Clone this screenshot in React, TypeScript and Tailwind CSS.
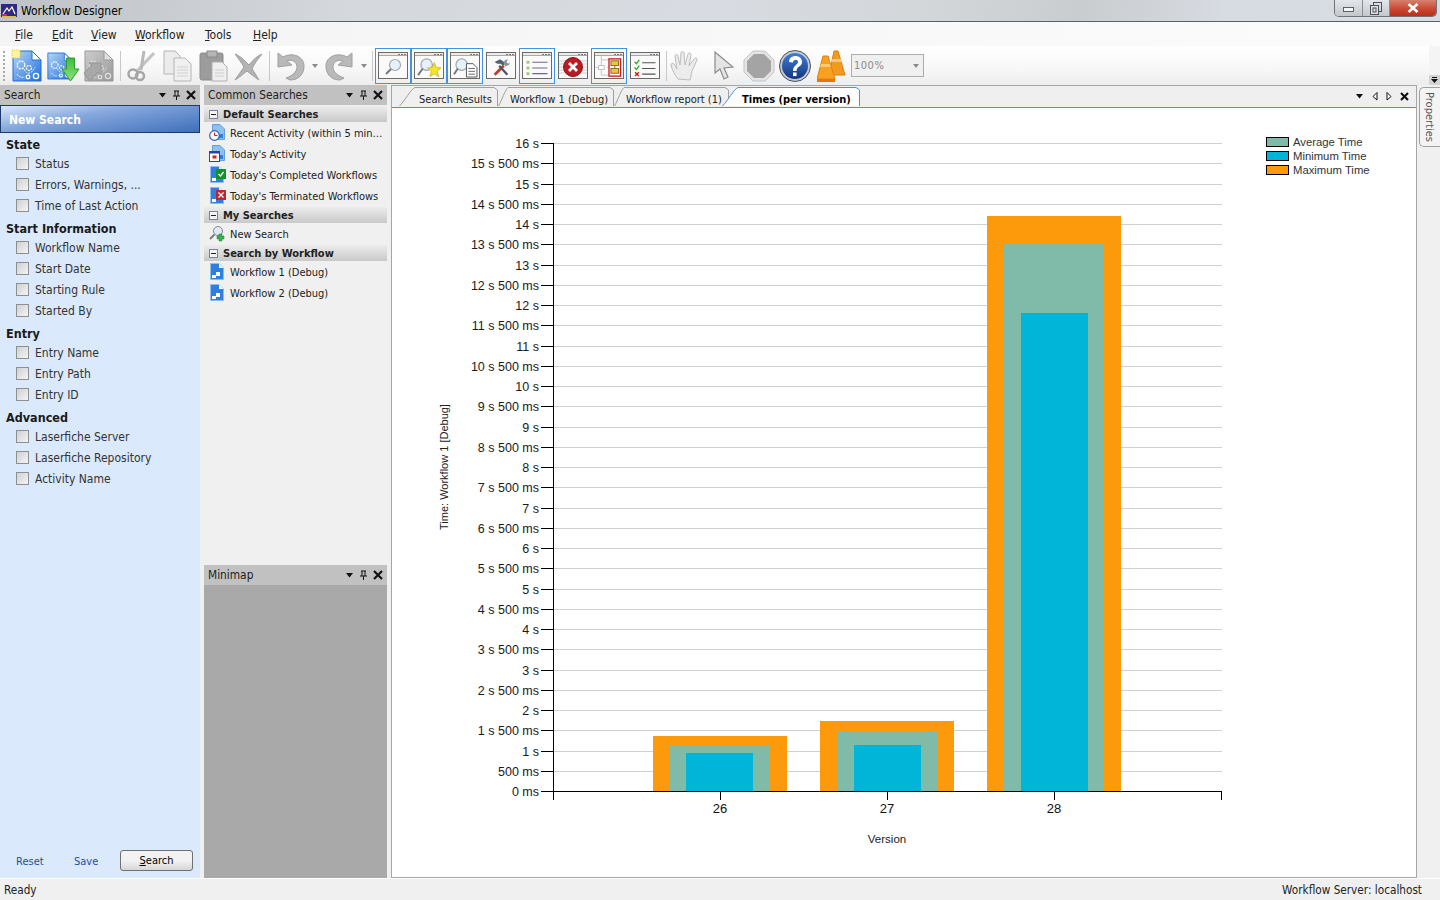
import React from "react";

const FONT = "font-['DejaVu_Sans_Condensed','DejaVu_Sans',sans-serif] [font-stretch:condensed]";

function Doc({ w = 30, h = 32, grey = false }: { w?: number; h?: number; grey?: boolean }) {
  const a = grey ? "#8f8f8f" : "#1f6fd6";
  const b = grey ? "#c8c8c8" : "#b6d6f8";
  const g = grey ? "#dddddd" : "#ffffff";
  return (
    <svg width={w} height={h} viewBox="0 0 30 32">
      <defs>
        <linearGradient id={grey ? "dg" : "db"} x1="0" y1="0" x2="1" y2="1">
          <stop offset="0" stopColor={b} />
          <stop offset="1" stopColor={a} />
        </linearGradient>
      </defs>
      <path d="M1 1H20L29 10V31H1Z" fill={`url(#${grey ? "dg" : "db"})`} stroke={a} />
      <path d="M20 1V10H29Z" fill={g} stroke={a} />
      <g fill="none" stroke={g} strokeWidth="1.300">
        <circle cx="9" cy="15" r="3.800" strokeDasharray="2 1" />
        <circle cx="17" cy="18" r="2.500" strokeDasharray="2 1" />
        <path d="M12 19C15 25 19 25 23 17M5 24C7 27 9 28 13 27" strokeWidth="0.900" strokeDasharray="2 1" />
        <circle cx="16" cy="27" r="1.800" />
        <circle cx="24" cy="26" r="2.600" />
      </g>
    </svg>
  );
}

function NewDoc() {
  return (
    <div className="relative w-[30px] h-[32px]">
      <Doc />
      <svg className="absolute -left-[1px] -top-[1px]" width="10" height="10" viewBox="0 0 10 10">
        <rect x="1" y="1" width="8" height="8" fill="#fff3a0" stroke="#e8c64a" strokeDasharray="1 1" />
      </svg>
    </div>
  );
}

function ImportDoc() {
  return (
    <div className="relative w-[33px] h-[32px]">
      <Doc w={26} h={32} />
      <svg className="absolute right-0 bottom-0" width="19" height="25" viewBox="0 0 19 25">
        <defs>
          <linearGradient id="ga" x1="0" y1="0" x2="0" y2="1">
            <stop offset="0" stopColor="#3fbd3c" />
            <stop offset="1" stopColor="#8fe07c" />
          </linearGradient>
        </defs>
        <path d="M5.500 1H13.500V12H18L9.500 24L1 12H5.500Z" fill="url(#ga)" stroke="#2f9a32" />
      </svg>
    </div>
  );
}

function ExportDoc() {
  return (
    <div className="relative w-[30px] h-[32px] opacity-90">
      <Doc grey />
      <svg className="absolute -left-[1px] bottom-0" width="20" height="20" viewBox="0 0 20 20">
        <path d="M1 11L9 3L6 1H18V13L15 10L7 19Z" fill="#a0a0a0" stroke="#8c8c8c" />
      </svg>
    </div>
  );
}

function Scissors() {
  return (
    <svg width="28" height="32" viewBox="0 0 28 32" fill="none" stroke="#a5a5a5">
      <path d="M27 3L10 21" strokeWidth="3" stroke="#c4c4c4" />
      <path d="M17 1L14 20" strokeWidth="3" stroke="#b8b8b8" />
      <circle cx="6" cy="24" r="4.500" strokeWidth="2.500" />
      <circle cx="13" cy="26" r="4" strokeWidth="2.500" />
    </svg>
  );
}

function Copy() {
  return (
    <svg width="29" height="32" viewBox="0 0 29 32" stroke="#b5b5b5" fill="#ececec">
      <path d="M1 1H12L17 6V24H1Z" />
      <path d="M11 8H22L28 14V31H11Z" fill="#f0f0f0" />
      <path d="M14 17H25M14 20H25M14 23H25M14 26H25" stroke="#d0d0d0" />
    </svg>
  );
}

function Paste() {
  return (
    <svg width="29" height="32" viewBox="0 0 29 32">
      <rect x="1" y="3" width="23" height="27" rx="2" fill="#9c9c9c" stroke="#8a8a8a" />
      <rect x="8" y="1" width="10" height="6" fill="#b5b5b5" stroke="#8a8a8a" />
      <path d="M13 12H23L28 17V31H13Z" fill="#efefef" stroke="#b0b0b0" />
      <path d="M16 20H25M16 23H25M16 26H25" stroke="#cccccc" />
    </svg>
  );
}

function DelX() {
  return (
    <svg width="30" height="30" viewBox="0 0 30 30">
      <path d="M2 3C9 6 13 11 16 14C20 9 24 5 29 3C25 8 21 13 19 18C22 22 24 26 26 29C21 26 18 23 14 20C10 23 7 26 2 29C5 25 8 20 11 16C8 11 5 7 2 3Z" fill="#b3b3b3" stroke="#9e9e9e" />
    </svg>
  );
}

function Undo({ flip = false }: { flip?: boolean }) {
  return (
    <svg width="28" height="31" viewBox="0 0 28 31" style={flip ? { transform: "scaleX(-1)" } : undefined}>
      <path d="M1 3L1 17L15 15L10 11C15 9 20 12 20 17C20 22 15 26 9 28L13 30C22 30 27 24 27 16C27 6 15 2 6 7Z" fill="#b9b9b9" stroke="#9f9f9f" />
    </svg>
  );
}

function Caret() {
  return (
    <svg width="6" height="4" viewBox="0 0 6 4"><path d="M0 0H6L3 4Z" fill="#8a8a8a" /></svg>
  );
}

function Sep({ ml }: { ml: string }) {
  return <div className={`${ml} w-[1px] h-[30px] bg-[#c8c8c8] shrink-0`} />;
}

function Win({ children }: { children?: React.ReactNode }) {
  return (
    <div className="w-[30px] h-[27px] bg-[#fafafa] border border-[#6a6a6a] flex flex-col overflow-hidden">
      <div className="h-[3px] bg-[#ececec] border-b border-[#a8a8a8] flex items-center justify-end gap-[1px] pr-[1px] shrink-0">
        <div className="w-[2px] h-[1px] bg-[#777]" />
        <div className="w-[2px] h-[1px] bg-[#777]" />
        <div className="w-[2px] h-[1px] bg-[#777]" />
      </div>
      <div className="flex-1 flex items-center justify-center">{children}</div>
    </div>
  );
}

function Tool({ active, children }: { active?: boolean; children?: React.ReactNode }) {
  return (
    <div className={`w-[36px] h-[36px] flex items-center justify-center shrink-0 border ${active ? "border-[#3f94e6]" : "border-transparent"}`}>
      <Win>{children}</Win>
    </div>
  );
}

function Plain({ children }: { children?: React.ReactNode }) {
  return <div className="w-[30px] h-[36px] flex items-center shrink-0"><Win>{children}</Win></div>;
}

function Lens({ s = 20 }: { s?: number }) {
  return (
    <svg width={s} height={s} viewBox="0 0 20 20" fill="none">
      <circle cx="12" cy="8" r="5.500" fill="#e6f1fa" stroke="#a0a8ae" strokeWidth="1.200" />
      <path d="M8 12L3 17" stroke="#777" strokeWidth="2" />
    </svg>
  );
}

function Gap() {
  return <div className="w-[3px] shrink-0" />;
}

function ToolIcons() {
  return (
    <>
      <Tool active><Lens /></Tool>
      <Tool active>
        <svg width="25" height="21" viewBox="0 0 26 22">
          <circle cx="10" cy="8" r="6" fill="#e6f1fa" stroke="#a0a8ae" strokeWidth="1.300" />
          <path d="M6 12L1 19" stroke="#777" strokeWidth="2" />
          <path d="M18 6L20 11L25 11.500L21 15L22.500 20.500L18 17.500L13.500 20.500L15 15L11 11.500L16 11Z" fill="#f7e52c" stroke="#d6b820" />
        </svg>
      </Tool>
      <Tool active>
        <svg width="25" height="21" viewBox="0 0 26 22">
          <circle cx="9" cy="8" r="6" fill="#e6f1fa" stroke="#a0a8ae" strokeWidth="1.300" />
          <path d="M5 12L1 18" stroke="#777" strokeWidth="2" />
          <path d="M14 7H21L25 11V21H14Z" fill="#fff" stroke="#555" />
          <path d="M16 12H23M16 15H23M16 18H23" stroke="#666" />
        </svg>
      </Tool>
      <Gap />
      <Plain>
        <svg width="20" height="19" viewBox="0 0 22 20">
          <path d="M4 18L14 8" stroke="#c0392b" strokeWidth="3" />
          <path d="M18 18L9 8" stroke="#4a5560" strokeWidth="2.400" />
          <path d="M4 4L10 1L16 5L14 8L10 6L7 6Z" fill="#56626e" />
          <path d="M14 6L15 2L19 1L17 4L19 6L21 4L20 7L16 9Z" fill="#8a949c" />
        </svg>
      </Plain>
      <Gap />
      <Tool active>
        <svg width="24" height="19" viewBox="0 0 24 20">
          <rect x="1" y="3" width="3" height="3" fill="#9cc67a" />
          <rect x="1" y="9" width="3" height="3" fill="#9cc67a" />
          <rect x="1" y="15" width="3" height="3" fill="#9cc67a" />
          <path d="M7 4.500H23M7 10.500H23M7 16.500H23" stroke="#6a6a92" strokeWidth="1.200" />
        </svg>
      </Tool>
      <Gap />
      <Plain>
        <svg width="28" height="22" viewBox="0 0 28 22">
          <path d="M0 5H28M0 8H28M0 11H28M0 14H28M0 17H28" stroke="#cfcfcf" />
          <circle cx="14" cy="11" r="9.500" fill="#b81c22" stroke="#8d1418" />
          <path d="M10 7L18 15M18 7L10 15" stroke="#fff" strokeWidth="2.800" />
        </svg>
      </Plain>
      <Gap />
      <Tool active>
        <svg width="28" height="23" viewBox="0 0 28 24">
          <path d="M0 12H8M12 12H18M6 0V4M6 4H18M6 4V20H18" stroke="#c8c8c8" fill="none" />
          <rect x="3" y="10" width="6" height="4" fill="#fff" stroke="#bdbdbd" />
          <rect x="14" y="3" width="12" height="18" fill="#fff" stroke="#d01818" strokeWidth="1.400" />
          <rect x="16" y="5" width="8" height="5" fill="#f2c14a" stroke="#8a6a14" />
          <rect x="16" y="13" width="8" height="5" fill="#f2c14a" stroke="#8a6a14" />
          <path d="M20 10V13" stroke="#8a6a14" />
        </svg>
      </Tool>
      <Gap />
      <Plain>
        <svg width="24" height="19" viewBox="0 0 24 20" fill="none">
          <path d="M1 4L3 6L6 2M1 10L3 12L6 8" stroke="#3aa82f" strokeWidth="1.400" />
          <path d="M1.500 15L5.500 19M5.500 15L1.500 19" stroke="#d01818" strokeWidth="1.400" />
          <path d="M9 5H23M9 11H23M9 17H23" stroke="#555" strokeWidth="1.200" />
        </svg>
      </Plain>
    </>
  );
}

function Hand() {
  return (
    <svg width="30" height="32" viewBox="0 0 30 32">
      <path d="M8 29C5 25 2 20 1 15C1 13 3 13 4 14L7 19L5 6C5 4 8 4 8 6L10 15L11 3C11 1 14 1 14 3L15 15L18 4C18.500 2 21 3 21 5L19 16L24 9C25 7 28 8 27 10L22 21C21 25 21 27 20 30Z" fill="#ececec" stroke="#bdbdbd" />
    </svg>
  );
}

function Arrow() {
  return (
    <svg width="22" height="30" viewBox="0 0 22 30">
      <path d="M2 1V22L7 18L11 28L15 26L11 17L20 16Z" fill="#e4e4e4" stroke="#8c8c8c" strokeWidth="1.200" />
    </svg>
  );
}

function Stop() {
  return (
    <svg width="32" height="32" viewBox="0 0 32 32">
      <path d="M10 1H22L31 10V22L22 31H10L1 22V10Z" fill="#e4e4e4" stroke="#c4c4c4" />
      <path d="M11 4H21L28 11V21L21 28H11L4 21V11Z" fill="#a4a4a4" />
    </svg>
  );
}

function Help() {
  return (
    <svg width="32" height="32" viewBox="0 0 32 32">
      <defs>
        <linearGradient id="hb" x1="0" y1="0" x2="0" y2="1">
          <stop offset="0" stopColor="#3f7fd6" />
          <stop offset="1" stopColor="#14357f" />
        </linearGradient>
      </defs>
      <circle cx="16" cy="16" r="15.500" fill="#c5c9d0" stroke="#4a4f58" />
      <circle cx="16" cy="16" r="13" fill="url(#hb)" />
      <path d="M10 12C10 4 23 4 23 12C23 17 17.500 16 17.500 21H14C14 15 19 15 19 12C19 9 14 9 14 12.500Z" fill="#fff" />
      <rect x="14" y="22.500" width="3.600" height="3.600" fill="#fff" />
    </svg>
  );
}

function Cones() {
  return (
    <svg width="29" height="32" viewBox="0 0 29 32">
      <path d="M17 1H21L28 25H12Z" fill="#f29a1e" stroke="#d97d10" />
      <path d="M15 9H24L25 12H14Z" fill="#f9c877" />
      <path d="M6 6H11L18 29H0Z" fill="#f7a11e" stroke="#e07f10" />
      <path d="M4 14H13L14 17H3Z" fill="#f9c877" />
      <path d="M0 29H18V32H0Z" fill="#e6760d" />
    </svg>
  );
}

function Toolbar() {
  return (
    <div className="h-[39px] flex items-center bg-[linear-gradient(#ffffff,#f7f7f7_60%,#ededed)] shrink-0">
      <div className="ml-[3px] w-[2px] h-[30px] border-l-2 border-dotted border-[#a8a8a8] shrink-0" />
      <div className="ml-[7px] shrink-0"><NewDoc /></div>
      <div className="ml-[5px] shrink-0"><ImportDoc /></div>
      <div className="ml-[4px] shrink-0"><ExportDoc /></div>
      <Sep ml="ml-[6px]" />
      <div className="ml-[6px] shrink-0"><Scissors /></div>
      <div className="ml-[8px] shrink-0"><Copy /></div>
      <div className="ml-[7px] shrink-0"><Paste /></div>
      <div className="ml-[5px] shrink-0"><DelX /></div>
      <Sep ml="ml-[6px]" />
      <div className="ml-[7px] shrink-0"><Undo /></div>
      <div className="ml-[7px] shrink-0"><Caret /></div>
      <div className="ml-[7px] shrink-0"><Undo flip /></div>
      <div className="ml-[8px] shrink-0"><Caret /></div>
      <Sep ml="ml-[5px]" />
      <div className="ml-[2px] flex items-center shrink-0"><ToolIcons /></div>
      <Sep ml="ml-[6px]" />
      <div className="ml-[3px] shrink-0"><Hand /></div>
      <div className="ml-[13px] shrink-0"><Arrow /></div>
      <div className="ml-[8px] shrink-0"><Stop /></div>
      <div className="ml-[4px] shrink-0"><Help /></div>
      <div className="ml-[6px] shrink-0"><Cones /></div>
      <div className="ml-[5px] w-[73px] h-[23px] pt-[1px] border border-[#adadad] bg-[#f0f0f0] flex items-center justify-between pl-[2px] pr-[4px] text-[11px] tracking-[0.5px] text-[#8a8a8a] shrink-0">
        100%
        <Caret />
      </div>
      <div className="ml-auto self-stretch w-[11px] bg-[#f4f4f4] flex items-end shrink-0">
        <div className="w-[11px] h-[10px] bg-[#d4d4d4] flex items-center justify-center">
          <svg width="9" height="8" viewBox="0 0 9 8"><path d="M2 1H7V2H2ZM1 3H8L4.500 7Z" fill="#111" /></svg>
        </div>
      </div>
    </div>
  );
}

function PanelHeader({ title }: { title: string }) {
  return (
    <div className="h-[20px] bg-[#c1c1c1] flex items-center pl-[4px] pr-[4px] text-[11.800px] text-[#222] shrink-0">
      <span className="flex-1 pt-[2px]">{title}</span>
      <PanelButtons />
    </div>
  );
}

function PanelButtons() {
  return (
    <div className="flex items-center gap-[5px]">
      <svg width="9" height="5" viewBox="0 0 9 5"><path d="M1 0H8L4.500 4.500Z" fill="#111" /></svg>
      <svg className="mx-[1px]" width="7" height="10" viewBox="0 0 7 10"><path d="M1 1H6M2 1V6M5 1V6M0 6H7M3.500 6V10" stroke="#111" fill="none" /></svg>
      <svg width="10" height="10" viewBox="0 0 10 10"><path d="M1 1L9 9M9 1L1 9" stroke="#111" strokeWidth="2.200" /></svg>
    </div>
  );
}

function CheckRow({ label }: { label: string }) {
  return (
    <div className="h-[21px] flex items-center pl-[16px] text-[12px] text-[#333]">
      <div className="w-[13px] h-[13px] border border-[#8e8f8f] bg-[linear-gradient(135deg,#cfd0d2,#f4f4f4)] mr-[6px] shrink-0" />
      <span className="pt-[1px]">{label}</span>
    </div>
  );
}

function Section({ title, items }: { title: string; items: string[] }) {
  return (
    <div className="pb-[3px]">
      <div className="h-[18px] flex items-center pl-[6px] pt-[2px] text-[12.500px] font-bold text-[#1a1a1a]">{title}</div>
      {items.map((i) => <CheckRow key={i} label={i} />)}
    </div>
  );
}

function SearchPanel() {
  return (
    <div className="w-[200px] flex flex-col shrink-0">
      <PanelHeader title="Search" />
      <div className="flex-1 bg-[#dbe9fc] flex flex-col">
        <div className="h-[28px] pt-[1px] border border-[#1d3a66] bg-[linear-gradient(170deg,#dbe8fa,#85a7dc_40%,#3d6fbb)] flex items-center pl-[8px] text-[12px] font-bold text-white shrink-0">New Search</div>
        <div className="pt-[2px]">
          <Section title="State" items={["Status", "Errors, Warnings, ...", "Time of Last Action"]} />
          <Section title="Start Information" items={["Workflow Name", "Start Date", "Starting Rule", "Started By"]} />
          <Section title="Entry" items={["Entry Name", "Entry Path", "Entry ID"]} />
          <Section title="Advanced" items={["Laserfiche Server", "Laserfiche Repository", "Activity Name"]} />
        </div>
        <div className="mt-auto h-[35px] flex items-start pl-[16px] pt-[7px] text-[11px] text-[#1d4fa1]">
          <span className="mt-[4px] w-[58px]">Reset</span>
          <span className="mt-[4px] w-[46px]">Save</span>
          <div className="w-[73px] h-[21px] pt-[2px] border border-[#707070] rounded-[3px] bg-[linear-gradient(#f2f2f2_50%,#d6d6d6)] flex items-center justify-center text-black">
            <span><u>S</u>earch</span>
          </div>
        </div>
      </div>
    </div>
  );
}

function MiniDoc({ badge }: { badge?: "check" | "x" }) {
  return (
    <div className="relative w-[16px] h-[17px]">
      <svg width="14" height="17" viewBox="0 0 14 17" className="ml-[1px]">
        <path d="M0.500 0.500H9L13.500 5V16.500H0.500Z" fill="#2f80dc" stroke="#8fbcec" />
        <path d="M9 0.500V5H13.500Z" fill="#fff" />
        <rect x="6" y="9" width="4" height="4" fill="#fff" />
        <rect x="2" y="12" width="4" height="3" fill="#fff" />
      </svg>
      {badge && (
        <svg className="absolute -right-[1px] top-[3px]" width="10" height="10" viewBox="0 0 10 10">
          <rect width="10" height="10" fill={badge === "check" ? "#15902c" : "#b8282c"} />
          <path d={badge === "check" ? "M2.500 5L4.500 7L7.500 3" : "M2.500 2.500L7.500 7.500M7.500 2.500L2.500 7.500"} stroke="#fff" strokeWidth="1.300" fill="none" />
        </svg>
      )}
    </div>
  );
}

function TimeIcon({ kind }: { kind: "clock" | "cal" }) {
  return (
    <div className="relative w-[16px] h-[17px]">
      <svg className="ml-[3px]" width="13" height="16" viewBox="0 0 13 16">
        <path d="M0.500 0.500H8L12.500 5V15.500H0.500Z" fill="#8fc0ee" stroke="#5f9fe0" />
        <rect x="7" y="10" width="4" height="4" fill="#2f80dc" />
      </svg>
      <svg className="absolute left-0 bottom-0" width="11" height="11" viewBox="0 0 11 11">
        {kind === "clock" ? (
          <>
            <circle cx="5.500" cy="5.500" r="4.800" fill="#fff" stroke="#2c63b8" strokeWidth="1.200" />
            <path d="M5.500 2.500V5.500H8.500" stroke="#d02020" fill="none" />
          </>
        ) : (
          <>
            <rect x="0.500" y="0.500" width="10" height="10" fill="#fff" stroke="#2b3fb0" />
            <rect x="0.500" y="0.500" width="10" height="2" fill="#2b3fb0" />
            <rect x="3.500" y="4.500" width="4" height="3" fill="#d02020" />
          </>
        )}
      </svg>
    </div>
  );
}

function SearchPlus() {
  return (
    <svg width="16" height="17" viewBox="0 0 16 17">
      <circle cx="9" cy="6" r="4.500" fill="#dfeaf4" stroke="#7f8a94" />
      <path d="M5.500 9.500L1 14" stroke="#777" strokeWidth="1.800" />
      <path d="M10 9H13V11H15V14H13V16H10V14H8V11H10Z" fill="#35b34a" stroke="#1f8a33" strokeWidth="0.500" />
    </svg>
  );
}

function GroupHeader({ title }: { title: string }) {
  return (
    <div className="h-[16px] mt-[1px] bg-[linear-gradient(#ececec,#c9c9c9)] flex items-center pl-[5px] text-[11px] font-bold text-[#222] shrink-0">
      <svg className="mr-[5px]" width="9" height="9" viewBox="0 0 9 9">
        <rect x="0.500" y="0.500" width="8" height="8" fill="#f4f4f4" stroke="#6f86a8" />
        <path d="M2 4.500H7" stroke="#222" />
      </svg>
      <span className="pt-[2px]">{title}</span>
    </div>
  );
}

function LinkRow({ icon, label }: { icon: React.ReactNode; label: string }) {
  return (
    <div className="h-[21px] flex items-center pl-[5px] text-[11px] text-[#222] shrink-0 whitespace-nowrap">
      <div className="w-[21px] shrink-0">{icon}</div>
      <span className="pt-[4px]">{label}</span>
    </div>
  );
}

function CommonPanel() {
  return (
    <div className="w-[183px] ml-[4px] flex flex-col shrink-0">
      <PanelHeader title="Common Searches" />
      <div className="h-[460px] flex flex-col bg-[#f0f0f0] shrink-0">
        <GroupHeader title="Default Searches" />
        <LinkRow icon={<TimeIcon kind="clock" />} label="Recent Activity (within 5 min…" />
        <LinkRow icon={<TimeIcon kind="cal" />} label="Today's Activity" />
        <LinkRow icon={<MiniDoc badge="check" />} label="Today's Completed Workflows" />
        <LinkRow icon={<MiniDoc badge="x" />} label="Today's Terminated Workflows" />
        <GroupHeader title="My Searches" />
        <LinkRow icon={<SearchPlus />} label="New Search" />
        <GroupHeader title="Search by Workflow" />
        <LinkRow icon={<MiniDoc />} label="Workflow 1 (Debug)" />
        <LinkRow icon={<MiniDoc />} label="Workflow 2 (Debug)" />
      </div>
      <PanelHeader title="Minimap" />
      <div className="flex-1 bg-[#a9a9a9]" />
    </div>
  );
}

function Tab({ label, w, pl, active, cls = "", slant }: { label: string; w: number; pl: string; active?: boolean; cls?: string; slant: number }) {
  const d = `M0.500 19C${slant * 0.4} 13 ${slant * 0.7} 3 ${slant} 0.500H${w - 4}L${w - 0.5} 3V19`;
  return (
    <div className={`relative h-[20px] shrink-0 ${pl} ${cls} ${active ? "z-10" : ""}`} style={{ width: w }}>
      <svg className="absolute inset-0" width={w} height="20" viewBox={`0 0 ${w} 20`}>
        <path d={d} fill={active ? "#ffffff" : "#f0f0f0"} stroke={active ? "#3f94e6" : "#a0a0a0"} />
      </svg>
      <span className={`relative block pt-[2px] leading-[21px] text-[11px] whitespace-nowrap ${active ? "font-bold text-black" : "text-[#222]"}`}>{label}</span>
    </div>
  );
}

function DocPanel() {
  return (
    <div className="w-[1026px] ml-[4px] flex flex-col border-x border-b border-t border-[#a6a6a6] shrink-0">
      <div className="h-[22px] bg-[#efefef] border-b border-[#3f94e6] flex items-end pl-[7px] pr-[7px] shrink-0 relative">
        <Tab label="Search Results" w={99} pl="pl-[20px]" slant={16} />
        <Tab label="Workflow 1 (Debug)" w={116} pl="pl-[12px]" slant={10} />
        <Tab label="Workflow report (1)" w={115} pl="pl-[12px]" slant={10} />
        <Tab label="Times (per version)" w={138} pl="pl-[20px]" active cls="-ml-[7px]" slant={16} />
        <div className="ml-auto flex items-center gap-[8px] self-center">
          <svg width="9" height="5" viewBox="0 0 9 5"><path d="M1 0H8L4.500 4.500Z" fill="#111" /></svg>
          <svg width="6" height="9" viewBox="0 0 6 9"><path d="M5 0.500V8L1 4.500Z" fill="#fff" stroke="#111" /></svg>
          <svg width="6" height="9" viewBox="0 0 6 9"><path d="M1 0.500V8L5 4.500Z" fill="#fff" stroke="#111" /></svg>
          <svg width="9" height="9" viewBox="0 0 9 9"><path d="M1 1L8 8M8 1L1 8" stroke="#111" strokeWidth="2.200" /></svg>
        </div>
      </div>
      <div className="flex-1 bg-white min-h-0"><Chart /></div>
    </div>
  );
}

const BARS = [
  { x: 720, lab: "26", max: 736, avg: 745, min: 753, avgX: 669, minX: 686 },
  { x: 887, lab: "27", max: 721, avg: 732, min: 745, avgX: 837, minX: 854 },
  { x: 1054, lab: "28", max: 216, avg: 244, min: 313, avgX: 1003, minX: 1021 },
];

function tickLabel(i: number) {
  const whole = Math.floor(i / 2);
  if (i === 0) return "0 ms";
  if (i === 1) return "500 ms";
  return i % 2 === 0 ? `${whole} s` : `${whole} s 500 ms`;
}

function Chart() {
  const ticks = Array.from({ length: 33 }, (_, i) => i);
  const y = (i: number) => Math.round(791 - i * 20.25) + 0.5;
  return (
    <svg width="1024" height="770" viewBox="392 108 1024 770" className="block" fontFamily="'Liberation Sans',Arial,sans-serif">
      {ticks.map((i) => (
        <g key={i}>
          {i > 0 && <line x1="554" x2="1222" y1={y(i)} y2={y(i)} stroke="#d0d0d0" />}
          <line x1="541" x2="554" y1={y(i)} y2={y(i)} stroke="#000" />
          <text x="539" y={y(i) + 4} textAnchor="end" fontSize="12.500" fill="#1a1a1a">{tickLabel(i)}</text>
        </g>
      ))}
      {BARS.map((b) => (
        <g key={b.lab}>
          <rect x={b.x - 67} y={b.max} width="134" height={791 - b.max} fill="#fc9a0c" />
          <rect x={b.avgX} y={b.avg} width="101" height={791 - b.avg} fill="#80bba9" />
          <rect x={b.minX} y={b.min} width="67" height={791 - b.min} fill="#00b5d8" />
          <line x1={b.x + 0.5} x2={b.x + 0.5} y1="791" y2="800" stroke="#000" />
          <text x={b.x} y="813" textAnchor="middle" fontSize="13" fill="#111">{b.lab}</text>
        </g>
      ))}
      <line x1="553.500" x2="553.500" y1="143" y2="800" stroke="#000" />
      <line x1="553" x2="1222" y1="791.500" y2="791.500" stroke="#000" />
      <line x1="1221.500" x2="1221.500" y1="791" y2="800" stroke="#000" />
      <text x="887" y="843" textAnchor="middle" fontSize="11.500" fill="#222">Version</text>
      <text transform="translate(448,530) rotate(-90)" fontSize="11" fill="#222">Time: Workflow 1 [Debug]</text>
      {[
        { n: "Average Time", c: "#80bba9", y: 137 },
        { n: "Minimum Time", c: "#00b5d8", y: 151 },
        { n: "Maximum Time", c: "#fc9a0c", y: 165 },
      ].map((l) => (
        <g key={l.n}>
          <rect x="1266.500" y={l.y + 0.5} width="22" height="9" fill={l.c} stroke="#000" />
          <text x="1293" y={l.y + 9} fontSize="11.300" fill="#333">{l.n}</text>
        </g>
      ))}
    </svg>
  );
}

function WindowButtons() {
  return (
    <div className="flex h-[17px] mr-[3px] border border-t-0 border-[#6f7378] rounded-b-[5px] overflow-hidden self-start shrink-0">
      <div className="w-[28px] border-r border-[#8a8e93] bg-[linear-gradient(#e3e6ea,#c4c8cd)] flex items-center justify-center">
        <div className="w-[11px] h-[5px] mt-[3px] border border-[#5b6066] bg-[#f4f4f4]" />
      </div>
      <div className="w-[27px] border-r border-[#8a8e93] bg-[linear-gradient(#e3e6ea,#c4c8cd)] flex items-center justify-center">
        <svg width="12" height="13" viewBox="0 0 12 13" fill="none" stroke="#4b5056">
          <rect x="3.500" y="0.500" width="8" height="9" />
          <rect x="0.500" y="3.500" width="8" height="9" fill="#dfe2e6" />
          <rect x="3" y="6" width="3" height="4" />
        </svg>
      </div>
      <div className="w-[46px] bg-[linear-gradient(#d6816f,#c9452f_60%,#b5301e)] flex items-center justify-center">
        <svg width="12" height="10" viewBox="0 0 12 10"><path d="M1.500 1L10.500 9M10.500 1L1.500 9" stroke="#fff" strokeWidth="2.600" /></svg>
      </div>
    </div>
  );
}

function Menu({ w, k, rest }: { w: string; k: string; rest: string }) {
  return <span className={`${w} shrink-0`}><u>{k}</u>{rest}</span>;
}

export default function App() {
  return (
    <div className={`w-[1440px] h-[900px] overflow-hidden flex flex-col bg-[#f0f0f0] ${FONT}`}>
      <div className="h-[22px] border-b border-[#5c5f63] bg-[linear-gradient(100deg,#bfc3c7,#d5d9dd_25%,#d8dce2_50%,#d2d6d9_65%,#c9cdcf_75%,#d7dbe2_85%,#d8dce3)] flex items-center shrink-0">
        <svg className="ml-[1px] mr-[4px]" width="16" height="16" viewBox="0 0 16 16">
          <rect width="16" height="13" y="1" fill="#31297d" />
          <path d="M2 11L6 5L8 8L11 4L14 11" stroke="#fff" fill="none" strokeWidth="1.200" />
          <path d="M1 13H15V15H1Z" fill="#d8c23a" />
          <path d="M1 11H6V13H1Z" fill="#c02a8a" />
        </svg>
        <span className="flex-1 text-[12px] text-black">Workflow Designer</span>
        <WindowButtons />
      </div>
      <div className="h-[24px] pl-[15px] pt-[1px] bg-[linear-gradient(90deg,#f4f4f4,#fbfbfb)] flex items-center text-[12px] text-[#222] shrink-0">
        <Menu w="w-[37px]" k="F" rest="ile" />
        <Menu w="w-[39px]" k="E" rest="dit" />
        <Menu w="w-[44px]" k="V" rest="iew" />
        <Menu w="w-[70px]" k="W" rest="orkflow" />
        <Menu w="w-[48px]" k="T" rest="ools" />
        <Menu w="w-[40px]" k="H" rest="elp" />
      </div>
      <Toolbar />
      <div className="flex-1 flex min-h-0">
        <SearchPanel />
        <CommonPanel />
        <DocPanel />
        <div className="flex-1 pl-[2px] pt-[2px]">
          <div className="w-[21px] h-[60px] pr-[2px] bg-[#f4f4f4] border border-r-0 border-[#a0a0a0] rounded-l-[5px] flex items-center justify-center">
            <span className="text-[11px] text-[#555] [writing-mode:vertical-rl]">Properties</span>
          </div>
        </div>
      </div>
      <div className="h-[22px] pt-[2px] bg-[#f0f0f0] border-t border-white flex items-center justify-between pl-[4px] pr-[18px] text-[11.700px] text-[#222] shrink-0">
        <span>Ready</span>
        <span>Workflow Server: localhost</span>
      </div>
    </div>
  );
}
